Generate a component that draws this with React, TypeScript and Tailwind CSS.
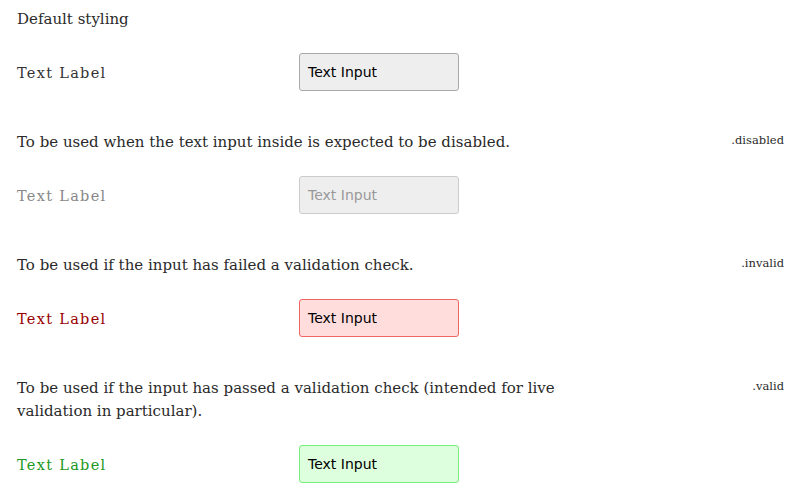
import React from "react";

const serif = { fontFamily: '"DejaVu Serif", serif' };

type Row = {
  desc: string;
  tag?: string;
  labelCls: string;
  inputCls: string;
};

const rows: Row[] = [
  {
    desc: "Default styling",
    labelCls: "text-[#333333]",
    inputCls: "bg-[#eeeeee] border-[#aaaaaa] text-black",
  },
  {
    desc: "To be used when the text input inside is expected to be disabled.",
    tag: ".disabled",
    labelCls: "text-[#888888]",
    inputCls: "bg-[#eeeeee] border-[#cccccc] text-[#999999]",
  },
  {
    desc: "To be used if the input has failed a validation check.",
    tag: ".invalid",
    labelCls: "text-[#990000]",
    inputCls: "bg-[#ffdddd] border-[#ee6666] text-black",
  },
  {
    desc: "To be used if the input has passed a validation check (intended for live validation in particular).",
    tag: ".valid",
    labelCls: "text-[#229922]",
    inputCls: "bg-[#ddffdd] border-[#77ee77] text-black",
  },
];

export default function App() {
  return (
    <div className="w-[801px] h-[500px] bg-white overflow-hidden pl-[17px] pr-[17px] pt-[8px]" style={serif}>
      {rows.map((r, i) => (
        <div key={i} className="flex flex-col mb-[40px]">
          <div className="flex justify-between items-start">
            <p className="text-[15px] leading-[23px] text-[#2a2a2a] max-w-[560px]">{r.desc}</p>
            {r.tag && (
              <span className="text-[11.5px] leading-[23px] text-[#2a2a2a] -mt-[2px]">{r.tag}</span>
            )}
          </div>
          <div className="flex items-center mt-[22px]">
            <span className={`w-[282px] pt-[3px] text-[14.5px] tracking-[1.3px] ${r.labelCls}`}>Text Label</span>
            <div
              className={`w-[160px] h-[38px] border rounded-[3px] flex items-center px-[8px] text-[14px] ${r.inputCls}`}
              style={{ fontFamily: '"DejaVu Sans", sans-serif' }}
            >
              Text Input
            </div>
          </div>
        </div>
      ))}
    </div>
  );
}
